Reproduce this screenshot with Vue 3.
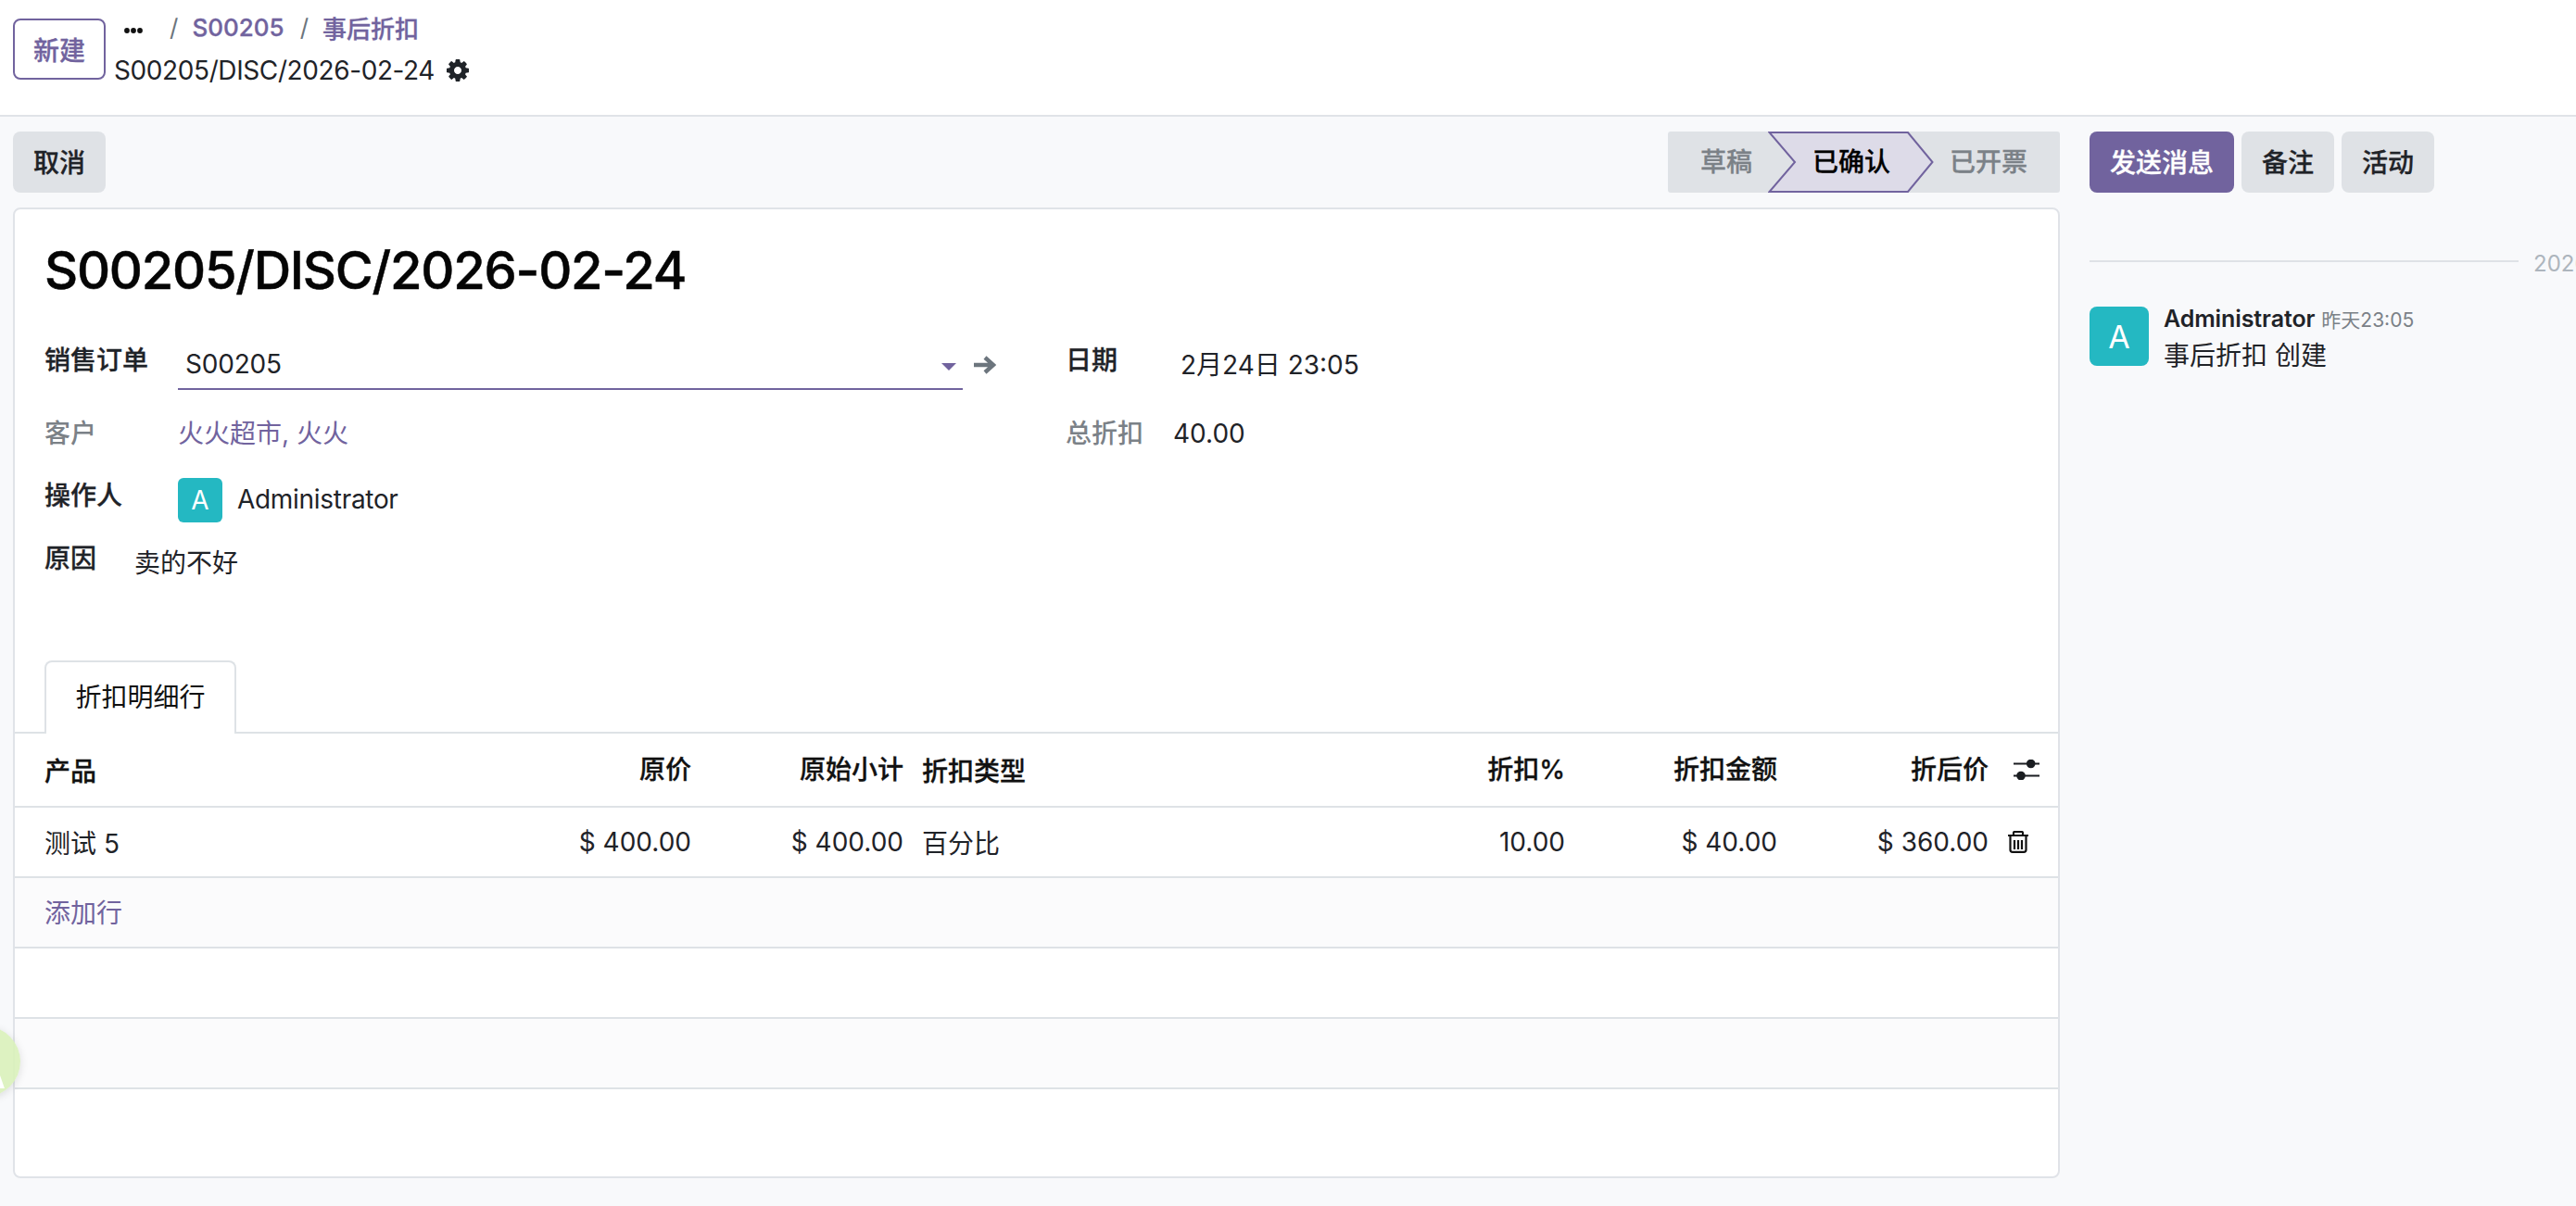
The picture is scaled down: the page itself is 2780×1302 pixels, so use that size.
<script setup>
const columns = [
  { label: '产品', value: '测试 5', align: 'left' },
  { label: '原价', value: '$ 400.00', align: 'right' },
  { label: '原始小计', value: '$ 400.00', align: 'right' },
  { label: '折扣类型', value: '百分比', align: 'left' },
  { label: '折扣%', value: '10.00', align: 'right' },
  { label: '折扣金额', value: '$ 40.00', align: 'right' },
  { label: '折后价', value: '$ 360.00', align: 'right' }
]
</script>

<template>
  <div class="app">
    <header class="topbar">
      <button class="btn-new">新建</button>
      <div class="crumbs">
        <div class="crumb-line">
          <svg class="dots" viewBox="0 0 20 6" width="20" height="6"><circle cx="3" cy="3" r="2.9" /><circle cx="10" cy="3" r="2.9" /><circle cx="17" cy="3" r="2.9" /></svg>
          <span class="slash first">/</span>
          <a class="crumb-link">S00205</a>
          <span class="slash">/</span>
          <a class="crumb-link">事后折扣</a>
        </div>
        <div class="record-line">
          <span class="tight">S00205/DISC/2026-02-24</span>
          <svg class="gear" viewBox="0 -128 1536 1536" width="24" height="24"><path fill-rule="evenodd" d="M1024 640q0-106-75-181t-181-75-181 75-75 181 75 181 181 75 181-75 75-181zm512-109v222q0 12-8 23t-20 13l-185 28q-19 54-39 91 35 50 107 138 10 12 10 25t-9 23q-27 37-99 108t-94 71q-12 0-26-9l-138-108q-44 23-91 38-16 136-29 186-7 28-36 28h-222q-14 0-24.5-8.5t-11.5-21.5l-28-184q-49-16-90-37l-141 107q-10 9-25 9-14 0-25-11-126-114-165-168-7-10-7-23 0-12 8-23 15-21 51-66.5t54-70.5q-27-50-41-99l-183-27q-13-2-21-12.5t-8-23.5v-222q0-12 8-23t19-13l186-28q14-46 39-92-40-57-107-138-10-12-10-24 0-10 9-23 26-36 98.5-107.5t94.5-71.5q13 0 26 10l138 107q44-23 91-38 16-136 29-186 7-28 36-28h222q14 0 24.5 8.5t11.5 21.5l28 184q49 16 90 37l142-107q9-9 24-9 13 0 25 10 129 119 165 170 7 8 7 22 0 12-8 23-15 21-51 66.5t-54 70.5q26 50 41 98l183 28q13 2 21 12.5t8 23.5z" /></svg>
        </div>
      </div>
    </header>

    <main class="body">
      <section class="form-col">
        <div class="actionbar">
          <button class="btn grey cancel">取消</button>
          <div class="status">
            <span class="st st-draft">草稿</span>
            <span class="st st-active">
              <svg class="chevron" viewBox="0 0 179 66" width="179" height="66"><polygon points="1.5,1 151,1 177.5,33 151,65 1.5,65 29,33" /></svg>
              <b>已确认</b>
            </span>
            <span class="st st-next">已开票</span>
          </div>
        </div>

        <article class="card">
          <h1 class="title">S00205/DISC/2026-02-24</h1>

          <div class="group">
            <div class="group-left">
              <div class="field f1">
                <label class="lbl strong w144">销售订单</label>
                <div class="m2o">
                  <span>S00205</span>
                  <svg class="caret" viewBox="0 0 16 8" width="16" height="8"><polygon points="0,0 16,0 8,8" /></svg>
                </div>
                <svg class="go" viewBox="0 0 26 20" width="26" height="20"><path d="M2 10H23M14 2l9 8-9 8" /></svg>
              </div>
              <div class="field f2">
                <label class="lbl muted w144">客户</label>
                <a class="val link">火火超市, 火火</a>
              </div>
              <div class="field f3">
                <label class="lbl strong w144 short">操作人</label>
                <div class="user">
                  <span class="ava small">A</span>
                  <span class="uname">Administrator</span>
                </div>
              </div>
              <div class="field f4">
                <label class="lbl strong w97">原因</label>
                <span class="val tall">卖的不好</span>
              </div>
            </div>
            <div class="group-right">
              <div class="field f1">
                <label class="lbl strong w124">日期</label>
                <span class="val tall">2月24日 23:05</span>
              </div>
              <div class="field f2">
                <label class="lbl muted w116">总折扣</label>
                <span class="val">40.00</span>
              </div>
            </div>
          </div>

          <nav class="tabs"><span class="tab">折扣明细行</span></nav>

          <div class="table">
            <div class="row head">
              <div v-for="c in columns" :key="c.label" class="cell" :class="c.align">{{ c.label }}</div>
              <div class="cell icon">
                <svg viewBox="0 0 28 22" width="28" height="22"><path class="ln" d="M0 4.5H28M0 17.5H28" /><circle cx="18.7" cy="4.5" r="4.8" /><circle cx="8" cy="17.5" r="4.8" /></svg>
              </div>
            </div>
            <div class="row data">
              <div v-for="c in columns" :key="c.label" class="cell" :class="c.align">{{ c.value }}</div>
              <div class="cell icon">
                <svg class="trash" viewBox="0 0 22 24" width="22" height="24"><path d="M0 5H22M6 5V2.2Q6 1 7.2 1H14.8Q16 1 16 2.2V5M2.5 5V20.5Q2.5 22.8 5 22.8H17Q19.5 22.8 19.5 20.5V5M7 10V20M11 10V20M15 10V20" /></svg>
              </div>
            </div>
            <div class="row shade"><a class="cell add">添加行</a></div>
            <div class="row"></div>
            <div class="row shade"></div>
          </div>
        </article>
      </section>

      <aside class="chatter">
        <div class="chat-actions">
          <button class="btn primary send">发送消息</button>
          <button class="btn grey note">备注</button>
          <button class="btn grey act">活动</button>
        </div>
        <div class="date-sep">
          <span class="sep-line"></span>
          <span class="sep-text">2026年2月24日</span>
        </div>
        <div class="msg">
          <span class="ava big">A</span>
          <div class="msg-body">
            <div class="msg-head"><b>Administrator</b><small>昨天23:05</small></div>
            <div class="msg-text">事后折扣 创建</div>
          </div>
        </div>
      </aside>
    </main>

    <div class="float-bubble"><span>A</span></div>
  </div>
</template>

<style>
html, body { margin: 0; padding: 0; background: #f8f9fb; }
</style>

<style scoped>
.app {
  position: relative;
  width: 2780px;
  height: 1302px;
  overflow: hidden;
  display: flex;
  flex-direction: column;
  background: #f8f9fb;
  color: #1f2328;
  font-family: Inter, "Noto Sans CJK SC", sans-serif;
  font-size: 28px;
}
button { font-family: inherit; cursor: pointer; }

.btn-new, .crumb-link, .btn, .status, .strong, .row.head {
  font-weight: 500;
  -webkit-text-stroke: 0.3px currentColor;
}

.topbar {
  height: 124px;
  flex: none;
  box-sizing: content-box;
  display: flex;
  align-items: flex-start;
  padding-left: 14px;
  background: #fff;
  border-bottom: 2px solid #e0e3e8;
}
.btn-new {
  width: 100px;
  height: 66px;
  margin-top: 20px;
  padding: 0;
  border: 2px solid #71639e;
  border-radius: 8px;
  background: #fff;
  color: #71639e;
  font-size: 28px;
}
.crumbs { margin-left: 9px; display: flex; flex-direction: column; }
.crumb-line {
  height: 36px;
  margin-top: 11px;
  display: flex;
  align-items: center;
  font-size: 26px;
  padding-left: 11px;
}
.dots { fill: #111; margin-top: 8px; }
.slash { color: #6c757d; margin: 0 15px 0 17px; font-weight: 400; }
.slash.first { margin-left: 29px; }
.crumb-link { color: #71639e; }
.record-line {
  height: 44px;
  margin-top: 7px;
  display: flex;
  align-items: center;
  line-height: 44px;
}
.tight { letter-spacing: -0.4px; }
.gear { fill: #1f2328; margin-left: 13px; }

.body { flex: 1; display: flex; min-height: 0; }
.form-col {
  width: 2209px;
  margin-left: 14px;
  padding: 16px 0 30px;
  display: flex;
  flex-direction: column;
}
.actionbar { height: 66px; display: flex; justify-content: space-between; flex: none; }
.btn {
  height: 66px;
  padding: 0 0 2px;
  border: 0;
  border-radius: 8px;
  font-size: 28px;
}
.btn.grey { background: #dfe2e6; color: #1f2328; }
.btn.primary { background: #71639e; color: #fff; }
.cancel { width: 100px; }

.status {
  width: 423px;
  display: flex;
  background: #dfe2e6;
  border-radius: 3px;
  color: #7b8187;
  line-height: 66px;
}
.st { display: block; height: 66px; flex: none; }
.st-draft { width: 108px; padding-left: 35px; box-sizing: border-box; }
.st-active { position: relative; width: 151px; text-align: left; padding-left: 48px; box-sizing: border-box; color: #000; }
.st-active b { position: relative; font-weight: 500; }
.chevron { position: absolute; left: 0; top: 0; fill: #dddbe8; stroke: #71639e; stroke-width: 2; }
.st-next { padding-left: 45px; }

.card {
  flex: 1;
  margin-top: 16px;
  background: #fff;
  border: 2px solid #e0e3e8;
  border-radius: 8px;
  display: flex;
  flex-direction: column;
  overflow: hidden;
}
.title {
  margin: 0;
  padding: 32px 0 0 32px;
  height: 77px;
  box-sizing: content-box;
  font-size: 56px;
  line-height: 68px;
  font-weight: 500;
  letter-spacing: -1.25px;
  -webkit-text-stroke: 0.5px currentColor;
  color: #050505;
}

.group { display: flex; padding-left: 32px; margin-top: 32px; }
.group-left { width: 1102px; flex: none; }
.field { display: flex; align-items: flex-start; }
.f2 { margin-top: 25px; }
.f3 { margin-top: 26px; }
.f4 { margin-top: 17px; }
.lbl { line-height: 44px; flex: none; }
.muted { color: #7b8187; font-weight: 500; }
.w144 { width: 144px; }
.w97 { width: 97px; }
.w124 { width: 124px; }
.w116 { width: 116px; }
.short { line-height: 38px; }
.val { line-height: 44px; }
.val.tall { line-height: 54px; }
.link { color: #71639e; }
.m2o {
  width: 847px;
  height: 54px;
  box-sizing: border-box;
  padding: 0 8px;
  border-bottom: 2px solid #71639e;
  display: flex;
  align-items: center;
  justify-content: space-between;
  letter-spacing: -0.2px;
}
.caret { fill: #71639e; margin-top: 6px; margin-right: -1px; }
.go { margin: 17px 0 0 10px; fill: none; stroke: #6c757d; stroke-width: 4.4; }
.user { display: flex; align-items: center; }
.ava {
  display: flex;
  align-items: center;
  justify-content: center;
  flex: none;
  background: #24b8c2;
  color: #fff;
}
.ava.small { width: 48px; height: 48px; border-radius: 6px; font-size: 28px; }
.uname { margin-left: 16px; margin-top: -2px; letter-spacing: -0.3px; }

.tabs {
  flex: none;
  margin-top: 78px;
  height: 77px;
  padding-left: 32px;
  border-bottom: 2px solid #dee2e6;
  display: flex;
}
.tab {
  width: 207px;
  height: 79px;
  box-sizing: border-box;
  border: 2px solid #dee2e6;
  border-bottom: 0;
  border-radius: 8px 8px 0 0;
  background: #fff;
  color: #111;
  text-align: center;
  line-height: 76px;
}

.row {
  display: grid;
  grid-template-columns: 511px 229px 229px 485px 229px 229px 228px 1fr;
  height: 76px;
  box-sizing: border-box;
  border-bottom: 2px solid #dee2e6;
}
.row.head { height: 80px; color: #111; }
.row.shade { background: #fbfbfc; }
.cell {
  display: flex;
  align-items: center;
  padding: 0 10px;
  min-width: 0;
  white-space: nowrap;
}
.cell:first-child { padding-left: 32px; }
.head .cell { padding-bottom: 5px; }
.cell.left { padding-bottom: 1px; }
.cell.right { justify-content: flex-end; }
.cell.icon { padding: 0 0 0 11px; }
.head .cell.icon { padding: 0 0 0 17px; }
.cell.icon svg { fill: #1a1d21; }
.ln { stroke: #1a1d21; stroke-width: 2; fill: none; }
.trash { fill: none !important; stroke: #111; stroke-width: 2.2; }
.add { color: #71639e; grid-column: 1 / 3; padding-bottom: 2px; }

.chatter {
  flex: 1;
  min-width: 0;
  margin-left: 32px;
  padding-top: 16px;
  overflow: hidden;
}
.chat-actions { display: flex; gap: 8px; height: 66px; }
.send { width: 156px; }
.note { width: 100px; }
.act { width: 100px; }
.date-sep {
  display: flex;
  align-items: center;
  margin-top: 56px;
  height: 36px;
  white-space: nowrap;
}
.sep-line { width: 463px; height: 2px; background: #dfe2e6; flex: none; }
.sep-text { margin-left: 16px; color: #adb5bd; font-size: 24px; }
.msg { display: flex; margin-top: 31px; }
.ava.big { width: 64px; height: 64px; border-radius: 8px; font-size: 34px; }
.msg-body { margin-left: 16px; }
.msg-head { height: 26px; line-height: 26px; display: flex; align-items: baseline; }
.msg-head b { font-size: 25px; font-weight: 600; letter-spacing: -0.1px; }
.msg-head small { margin-left: 7px; font-size: 21px; color: #7b8187; }
.msg-text { margin-top: 5px; line-height: 44px; }

.float-bubble {
  position: absolute;
  left: -54px;
  top: 1108px;
  width: 76px;
  height: 76px;
  border-radius: 50%;
  background: rgba(217, 241, 186, 0.9);
  box-shadow: 0 2px 10px rgba(0, 0, 0, 0.12);
  color: #fff;
  font-size: 60px;
  font-weight: 700;
  display: flex;
  align-items: center;
  justify-content: center;
}
.float-bubble span { margin-top: 14px; }
</style>
